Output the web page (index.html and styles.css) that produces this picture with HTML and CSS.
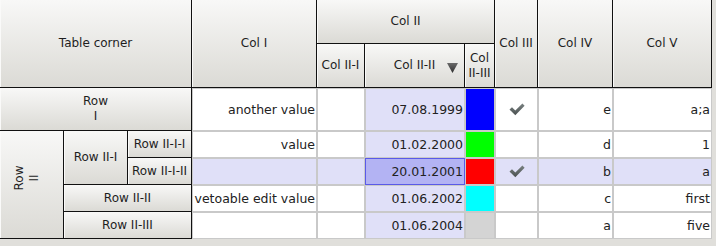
FILE: index.html
```html
<!DOCTYPE html>
<html>
<head>
<meta charset="utf-8">
<link rel="stylesheet" href="styles.css">
</head>
<body>
<div class="grid">
  <div class="hd corner">Table corner</div>
  <div class="hd c1">Col I</div>
  <div class="hd c2">Col II</div>
  <div class="hd c21">Col II-I</div>
  <div class="hd c22">Col II-II<svg class="sort" width="11" height="10" viewBox="0 0 11 10"><defs><linearGradient id="sg" x1="0" y1="0" x2="0" y2="1"><stop offset="0" stop-color="#6a6a6a"/><stop offset="1" stop-color="#2e2e2e"/></linearGradient></defs><polygon points="0,0 11,0 5.5,10" fill="url(#sg)"/></svg></div>
  <div class="hd c23">Col II-III</div>
  <div class="hd c3">Col III</div>
  <div class="hd c4">Col IV</div>
  <div class="hd c5">Col V</div>

  <div class="hd r1">Row<br>I</div>
  <div class="hd r2"><span class="rot">Row<br>II</span></div>
  <div class="hd r21">Row II-I</div>
  <div class="hd r211">Row II-I-I</div>
  <div class="hd r212">Row II-I-II</div>
  <div class="hd r22">Row II-II</div>
  <div class="hd r23">Row II-III</div>

  <div class="d">another value</div>
  <div class="d"></div>
  <div class="d s">07.08.1999</div>
  <div class="d sw blue"></div>
  <div class="d chk"><svg width="16" height="13" viewBox="0 0 16 13"><defs><linearGradient id="cg" x1="0" y1="0" x2="0" y2="1"><stop offset="0" stop-color="#7a8282"/><stop offset="1" stop-color="#4a5050"/></linearGradient></defs><polygon points="0.5,6.5 3,4.3 6.3,7.6 13.4,0.6 15.6,2.8 6.3,12.2" fill="url(#cg)"/></svg></div>
  <div class="d">e</div>
  <div class="d">a;a</div>

  <div class="d">value</div>
  <div class="d"></div>
  <div class="d s">01.02.2000</div>
  <div class="d sw green"></div>
  <div class="d"></div>
  <div class="d">d</div>
  <div class="d">1</div>

  <div class="d sel"></div>
  <div class="d sel"></div>
  <div class="d sel cur">20.01.2001</div>
  <div class="d sw red"></div>
  <div class="d sel chk"><svg width="16" height="13" viewBox="0 0 16 13"><defs><linearGradient id="cg2" x1="0" y1="0" x2="0" y2="1"><stop offset="0" stop-color="#7a8282"/><stop offset="1" stop-color="#4a5050"/></linearGradient></defs><polygon points="0.5,6.5 3,4.3 6.3,7.6 13.4,0.6 15.6,2.8 6.3,12.2" fill="url(#cg2)"/></svg></div>
  <div class="d sel">b</div>
  <div class="d sel">a</div>

  <div class="d">vetoable edit value</div>
  <div class="d"></div>
  <div class="d s">01.06.2002</div>
  <div class="d sw cyan"></div>
  <div class="d"></div>
  <div class="d">c</div>
  <div class="d">first</div>

  <div class="d"></div>
  <div class="d"></div>
  <div class="d s">01.06.2004</div>
  <div class="d sw grey"></div>
  <div class="d"></div>
  <div class="d">a</div>
  <div class="d">five</div>
</div>
</body>
</html>
```

FILE: styles.css
```css
html, body {
  margin: 0;
  padding: 0;
}
body {
  background: #e0dfdb;
  width: 716px;
  height: 246px;
  overflow: hidden;
  font-family: "DejaVu Sans", sans-serif;
  color: #222;
}
.grid {
  display: grid;
  width: 712px;
  grid-template-columns: 64px 64px 64px 125px 48px 100px 30px 43px 75px 99px;
  grid-template-rows: 44px 44px 43px 27px 27px 27px 27px;
}
.hd {
  box-sizing: border-box;
  display: flex;
  align-items: center;
  justify-content: center;
  text-align: center;
  font-size: 12px;
  line-height: 15px;
  color: #1e1e1e;
  background: linear-gradient(to bottom, #f8f8f7, #dbdad5);
  border-right: 1px solid #111;
  border-bottom: 1px solid #111;
  box-shadow: inset 1px 0 #fafaf9;
  position: relative;
}
.corner { grid-column: 1 / 4; grid-row: 1 / 3; }
.c1 { grid-column: 4; grid-row: 1 / 3; }
.c2 { grid-column: 5 / 8; grid-row: 1; }
.c21 { grid-column: 5; grid-row: 2; }
.c22 { grid-column: 6; grid-row: 2; }
.c23 { grid-column: 7; grid-row: 2; }
.c3 { grid-column: 8; grid-row: 1 / 3; }
.c4 { grid-column: 9; grid-row: 1 / 3; }
.c5 { grid-column: 10; grid-row: 1 / 3; }
.r1 { grid-column: 1 / 4; grid-row: 3; }
.r2 { grid-column: 1; grid-row: 4 / 8; }
.r21 { grid-column: 2; grid-row: 4 / 6; }
.r211 { grid-column: 3; grid-row: 4; }
.r212 { grid-column: 3; grid-row: 5; }
.r22 { grid-column: 2 / 4; grid-row: 6; }
.r23 { grid-column: 2 / 4; grid-row: 7; }

.sort {
  position: absolute;
  right: 6px;
  top: 19px;
}
.rot {
  display: block;
  transform: translate(-4px, -7px) rotate(-90deg);
  white-space: nowrap;
}

.d {
  box-sizing: border-box;
  display: flex;
  align-items: center;
  justify-content: flex-end;
  padding-right: 2px;
  font-size: 12.5px;
  color: #222;
  background: #fff;
  white-space: nowrap;
  overflow: hidden;
  box-shadow: inset 0 0 0 1px #c9c9c9;
}
.d.s, .d.sel { background: #e0e0f8; }
.d.cur {
  background: #b3b3f3;
  box-shadow: inset 0 0 0 1px #5a5ae8;
}
.d.chk { justify-content: center; padding-right: 0; }
.blue { background: #0000ff; }
.green { background: #00ff00; }
.red { background: #ff0000; }
.cyan { background: #00ffff; }
.grey { background: #d4d4d4; }
```
